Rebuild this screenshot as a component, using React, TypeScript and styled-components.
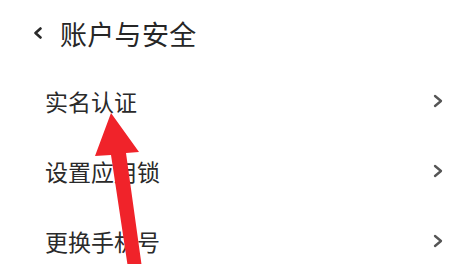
import React from "react";
import styled, { createGlobalStyle } from "styled-components";

const Global = createGlobalStyle`
  html, body { margin: 0; padding: 0; background: #fff; }
  body { font-family: "Noto Sans CJK SC", "Noto Sans", sans-serif; }
`;

const Page = styled.div`
  position: relative;
  width: 476px;
  height: 264px;
  overflow: hidden;
  background: #fff;
  display: flex;
  flex-direction: column;
`;

const Header = styled.div`
  height: 66px;
  display: flex;
  align-items: center;
  padding-left: 33px;
  gap: 18px;
  flex-shrink: 0;
`;

const Title = styled.div`
  font-size: 27px;
  color: #262626;
  line-height: 1;
  letter-spacing: 0.3px;
`;

const Row = styled.div`
  height: 70px;
  flex-shrink: 0;
  display: flex;
  align-items: center;
  justify-content: space-between;
  padding: 0 33px 0 45px;
`;

const Label = styled.span`
  font-size: 23px;
  color: #2a2a2a;
  line-height: 1;
`;

const Arrow = styled.svg`
  position: absolute;
  left: 0;
  top: 0;
  pointer-events: none;
`;

const BackIcon = () => (
  <svg width="9" height="12" viewBox="0 0 9 12">
    <polyline points="7.5,1.5 2.5,6 7.5,10.5" fill="none" stroke="#2a2a2a" strokeWidth="2.6" strokeLinecap="round" strokeLinejoin="round" />
  </svg>
);

const ChevronIcon = () => (
  <svg width="10" height="14" viewBox="0 0 10 14">
    <polyline points="2,2 8,7 2,12" fill="none" stroke="#555" strokeWidth="2.3" strokeLinecap="round" strokeLinejoin="round" />
  </svg>
);

const items = ["实名认证", "设置应用锁", "更换手机号"];

export default function App() {
  return (
    <>
      <Global />
      <Page>
        <Header>
          <BackIcon />
          <Title>账户与安全</Title>
        </Header>
        {items.map((t) => (
          <Row key={t}>
            <Label>{t}</Label>
            <ChevronIcon />
          </Row>
        ))}
        <Arrow width="476" height="264" viewBox="0 0 476 264">
          <polygon
            points="111,113 139,152 126,153 142,268 128,268 111,155 95,156"
            fill="#f0232a"
          />
        </Arrow>
      </Page>
    </>
  );
}
